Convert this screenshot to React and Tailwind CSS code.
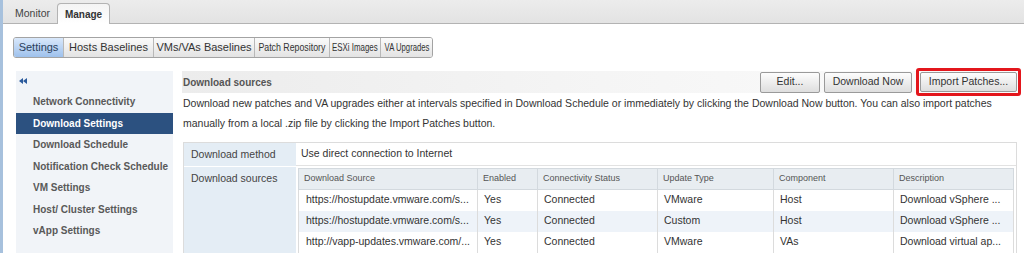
import React from "react";

const subTabs = [
  { label: "Settings", w: "w-[49px]", active: true },
  { label: "Hosts Baselines", w: "w-[90px]" },
  { label: "VMs/VAs Baselines", w: "w-[101px]" },
  { label: "Patch Repository", w: "w-[75px]", squeeze: "scale-x-[0.8]" },
  { label: "ESXi Images", w: "w-[51px]", squeeze: "scale-x-[0.72]" },
  { label: "VA Upgrades", w: "w-[52px]", squeeze: "scale-x-[0.7]" },
];

const navItems = [
  "Network Connectivity",
  "Download Settings",
  "Download Schedule",
  "Notification Check Schedule",
  "VM Settings",
  "Host/ Cluster Settings",
  "vApp Settings",
];

const columns = [
  { label: "Download Source", w: "w-[179px]" },
  { label: "Enabled", w: "w-[60px]" },
  { label: "Connectivity Status", w: "w-[120px]" },
  { label: "Update Type", w: "w-[116px]" },
  { label: "Component", w: "w-[120px]" },
  { label: "Description", w: "w-[120px]" },
];

const sources = [
  ["https://hostupdate.vmware.com/s...", "Yes", "Connected", "VMware", "Host", "Download vSphere ..."],
  ["https://hostupdate.vmware.com/s...", "Yes", "Connected", "Custom", "Host", "Download vSphere ..."],
  ["http://vapp-updates.vmware.com/...", "Yes", "Connected", "VMware", "VAs", "Download virtual ap..."],
  ["", "", "", "", "", ""],
];

function GrayButton({ children, className = "" }) {
  return (
    <button
      className={`flex items-center justify-center rounded-[2px] border border-[#9a9a9a] bg-gradient-to-b from-[#fdfdfd] to-[#dedede] text-[10.5px] text-[#333] ${className}`}
    >
      {children}
    </button>
  );
}

export default function App() {
  return (
    <div className="flex h-[253px] w-[1024px] overflow-hidden bg-white font-['Liberation_Sans',Arial,sans-serif] text-[#333]">
      {/* blue edge of the outer panel */}
      <div className="w-[3px] shrink-0 bg-[#a7c1dd]" />

      <div className="flex min-w-0 flex-1 flex-col">
        {/* Monitor / Manage */}
        <div className="flex h-[24px] shrink-0 items-end border-b border-[#b3b3b3] bg-gradient-to-b from-[#ececec] to-[#e3e3e3]">
          <div className="ml-[5px] flex h-[19px] w-[49px] items-center justify-center text-[10.5px] text-[#444]">
            Monitor
          </div>
          <div className="relative -mb-px flex h-[21px] w-[53px] items-center justify-center rounded-t-[4px] border border-b-0 border-[#b3b3b3] bg-gradient-to-b from-[#f4f4f4] to-white text-[10px] font-bold text-[#333]">
            Manage
          </div>
        </div>

        {/* sub tabs */}
        <div className="ml-[10px] mt-[13px] flex h-[21px] w-fit overflow-hidden rounded-[3px] border border-[#a3a3a3]">
          {subTabs.map((t, i) => (
            <div
              key={t.label}
              className={`flex ${t.w} items-center justify-center whitespace-nowrap text-[11px] ${
                i > 0 ? "border-l border-[#b8b8b8]" : ""
              } ${
                t.active
                  ? "bg-gradient-to-b from-[#d9e8fb] to-[#9ec1ec] text-[#2a3f5c]"
                  : "bg-gradient-to-b from-[#fbfbfb] to-[#e3e3e3] text-[#333]"
              }`}
            >
              <span className={`inline-block ${t.squeeze || ""}`}>{t.label}</span>
            </div>
          ))}
        </div>

        <div className="mt-[13px] flex min-h-0 flex-1">
          {/* settings navigation */}
          <div className="ml-[13px] w-[157px] shrink-0 bg-[#f1f4f8]">
            <div className="flex h-[20px] items-center pl-[3px]">
              <svg width="8" height="6" viewBox="0 0 8 6">
                <path d="M4 0 L0 3 L4 6 Z M8 0 L4 3 L8 6 Z" fill="#2a5a9c" />
              </svg>
            </div>
            {navItems.map((item) => (
              <div
                key={item}
                className={`flex h-[21.5px] items-center whitespace-nowrap pl-[17px] text-[10px] font-bold ${
                  item === "Download Settings" ? "bg-[#2c5180] text-white" : "text-[#595959]"
                }`}
              >
                {item}
              </div>
            ))}
          </div>

          {/* main */}
          <div className="ml-[9px] flex w-[839px] shrink-0 flex-col">
            <div className="flex h-[22px] items-center justify-between bg-gradient-to-r from-[#ececec] via-[#f5f5f5] to-[#fcfcfc] pl-[1px]">
              <span className="text-[10px] font-bold text-[#555]">Download sources</span>
              <div className="flex items-center">
                <GrayButton className="h-[21px] w-[60px]">Edit...</GrayButton>
                <GrayButton className="ml-[4px] h-[21px] w-[88px]">Download Now</GrayButton>
                <div className="ml-[4px] rounded-[3px] border-[3px] border-[#e3161c] p-px">
                  <GrayButton className="h-[20px] w-[97px]">Import Patches...</GrayButton>
                </div>
              </div>
            </div>

            <p className="pl-[1px] text-[10.5px] leading-[20px] text-[#333]">
              Download new patches and VA upgrades either at intervals specified in Download Schedule or
              immediately by clicking the Download Now button. You can also import patches
              <br />
              manually from a local .zip file by clicking the Import Patches button.
            </p>

            {/* properties */}
            <div className="ml-[1px] mr-[4px] mt-[9px] flex flex-1 flex-col border border-[#dcdcdc] text-[10.5px]">
              <div className="flex h-[23px]">
                <div className="flex w-[112px] shrink-0 items-center bg-[#e4edf5] pl-[7px] text-[#444]">
                  Download method
                </div>
                <div className="flex flex-1 items-center border-b border-[#e2e2e2] pl-[5px]">
                  Use direct connection to Internet
                </div>
              </div>
              <div className="flex flex-1">
                <div className="w-[112px] shrink-0 border-t border-white bg-[#e4edf5] pl-[7px] pt-[4px] text-[#444]">
                  Download sources
                </div>
                <div className="flex-1 pl-[2px] pr-[3px] pt-[2px]">
                  <table className="w-[715px] table-fixed border-collapse">
                    <thead>
                      <tr className="h-[21px] bg-[#e8edf1]">
                        {columns.map((c) => (
                          <th
                            key={c.label}
                            className={`${c.w} border border-[#d3d9de] pl-[5px] text-left text-[9px] font-normal text-[#555]`}
                          >
                            {c.label}
                          </th>
                        ))}
                      </tr>
                    </thead>
                    <tbody>
                      {sources.map((row, r) => (
                        <tr key={r} className={`h-[21px] ${r % 2 === 1 ? "bg-[#eef3f9]" : "bg-white"}`}>
                          {row.map((cell, c) => (
                            <td
                              key={c}
                              className={`border-x border-[#dcdcdc] ${c === 0 ? "pl-[7px]" : "pl-[6px]"} whitespace-nowrap text-[10.5px] text-[#333]`}
                            >
                              {cell}
                            </td>
                          ))}
                        </tr>
                      ))}
                    </tbody>
                  </table>
                </div>
              </div>
            </div>
          </div>
        </div>
      </div>
    </div>
  );
}
